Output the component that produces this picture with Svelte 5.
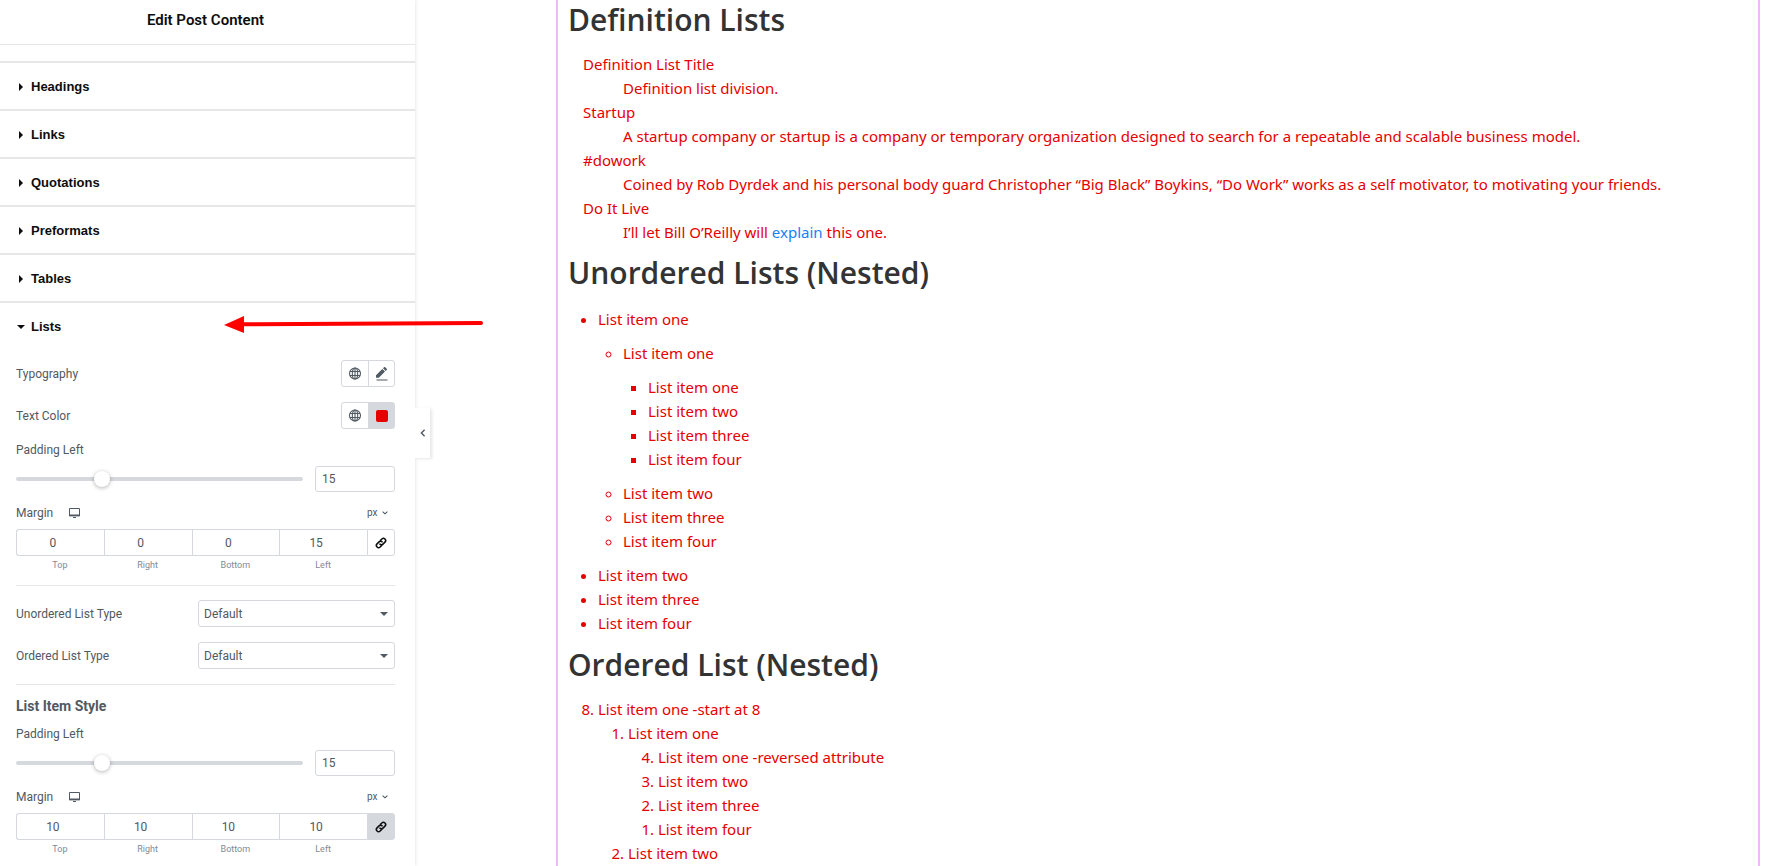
<script lang="ts">
  type Box = { side: string; value: number };

  const sections = ["Headings", "Links", "Quotations", "Preformats", "Tables"];
  const sides = ["Top", "Right", "Bottom", "Left"];

  let listsOpen = $state(true);
  let listPadding = $state(15);
  let itemPadding = $state(15);
  let unorderedType = $state("Default");
  let orderedType = $state("Default");

  let listMargin: Box[] = $state([0, 0, 0, 15].map((value, i) => ({ side: sides[i], value })));
  let itemMargin: Box[] = $state([10, 10, 10, 10].map((value, i) => ({ side: sides[i], value })));
  let listLinked = $state(false);
  let itemLinked = $state(true);
</script>

{#snippet globe()}
  <svg class="icon" viewBox="0 0 14 14" width="14" height="14" aria-hidden="true">
    <g fill="none" stroke="currentColor" stroke-width="1.1">
      <circle cx="7" cy="6.5" r="5.5" />
      <ellipse cx="7" cy="6.5" rx="2.7" ry="5.5" />
      <path d="M7 1v11M2 4.5h10M2 8.5h10" />
    </g>
  </svg>
{/snippet}

{#snippet chain()}
  <svg class="icon" viewBox="0 0 14 14" width="14" height="14" aria-hidden="true">
    <g fill="none" stroke="currentColor" stroke-width="1.5" transform="rotate(-45 7 7)">
      <path d="M6.2 9.2H3.6a2.2 2.2 0 0 1 0-4.4h2.8a2.2 2.2 0 0 1 2.1 2.8" />
      <path d="M7.8 4.8h2.6a2.2 2.2 0 0 1 0 4.4H7.6a2.2 2.2 0 0 1-2.1-2.8" />
    </g>
  </svg>
{/snippet}

{#snippet marginHead(id: string)}
  <div class="margin-head">
    <span>Margin</span>
    <button type="button" class="device" aria-label="Desktop">
      <svg viewBox="0 0 11 10" width="11" height="10" aria-hidden="true">
        <path d="M.5.5h10v7.2H.5z" fill="none" stroke="currentColor" />
        <path d="M0 6.6h11v1.6H0zM4 9h3v1H4z" fill="currentColor" />
      </svg>
    </button>
    <span class="unit">
      <select {id} aria-label="Margin unit">
        <option>px</option>
        <option>em</option>
        <option>%</option>
      </select>
      <svg viewBox="0 0 6 4" width="6" height="4" aria-hidden="true">
        <path d="M.6.6 3 2.8 5.4.6" fill="none" stroke="currentColor" stroke-width="1.1" />
      </svg>
    </span>
  </div>
{/snippet}

{#snippet caret()}
  <svg class="select-caret" viewBox="0 0 8 4" width="8" height="4" aria-hidden="true">
    <path d="M0 0h8L4 4z" fill="currentColor" />
  </svg>
{/snippet}

<div class="editor">
  <aside class="panel">
    <header class="panel-header"><h1>Edit Post Content</h1></header>

    <div class="sections">
      {#each sections as name}
        <button type="button" class="section-title" aria-expanded="false">
          <svg viewBox="0 0 8 8" width="8" height="8" aria-hidden="true">
            <path d="M2 0 6 4 2 8z" fill="currentColor" />
          </svg>
          {name}
        </button>
      {/each}
      <button
        type="button"
        class="section-title"
        aria-expanded={listsOpen}
        onclick={() => (listsOpen = !listsOpen)}
      >
        <svg viewBox="0 0 8 8" width="8" height="8" aria-hidden="true">
          <path d="M0 2h8L4 6z" fill="currentColor" />
        </svg>
        Lists
      </button>
    </div>

    {#if listsOpen}
      <div class="controls">
        <div class="row">
          <span>Typography</span>
          <div class="pair">
            <button type="button" aria-label="Global fonts">{@render globe()}</button>
            <button type="button" aria-label="Edit typography">
              <svg class="icon" viewBox="0 0 14 14" width="14" height="14" aria-hidden="true">
                <path
                  d="M1 10.8V8.2l6.3-6.3 2.7 2.7-6.2 6.2zM8 1.2 9 .3a1 1 0 0 1 1.3 0l1.4 1.4a1 1 0 0 1 0 1.3l-1 .9zM1.5 12.4h11v1.2h-11z"
                  fill="currentColor"
                />
              </svg>
            </button>
          </div>
        </div>

        <div class="row">
          <span>Text Color</span>
          <div class="pair">
            <button type="button" aria-label="Global colors">{@render globe()}</button>
            <button type="button" class="is-active" aria-label="Pick color"><i class="swatch"></i></button>
          </div>
        </div>

        <div class="stack">
          <label for="list-padding">Padding Left</label>
          <div class="slider">
            <input type="range" min="0" max="52" aria-label="Padding Left" bind:value={listPadding} />
            <input id="list-padding" class="amount" type="number" bind:value={listPadding} />
          </div>
        </div>

        <div class="stack">
          {@render marginHead("list-margin-unit")}
          <div class="dimensions">
            {#each listMargin as box}
              <label>
                <input type="number" bind:value={box.value} />
                <span>{box.side}</span>
              </label>
            {/each}
            <button
              type="button"
              class:is-active={listLinked}
              aria-label="Link values together"
              onclick={() => (listLinked = !listLinked)}
            >
              {@render chain()}
            </button>
          </div>
        </div>

        <div class="row ruled">
          <label for="unordered-type">Unordered List Type</label>
          <div class="select">
            <select id="unordered-type" bind:value={unorderedType}>
              <option>Default</option>
              <option>Disc</option>
              <option>Circle</option>
              <option>Square</option>
            </select>
            {@render caret()}
          </div>
        </div>

        <div class="row">
          <label for="ordered-type">Ordered List Type</label>
          <div class="select">
            <select id="ordered-type" bind:value={orderedType}>
              <option>Default</option>
              <option>Decimal</option>
              <option>Lower Alpha</option>
              <option>Upper Roman</option>
            </select>
            {@render caret()}
          </div>
        </div>

        <h2 class="ruled">List Item Style</h2>

        <div class="stack">
          <label for="item-padding">Padding Left</label>
          <div class="slider">
            <input type="range" min="0" max="52" aria-label="Padding Left" bind:value={itemPadding} />
            <input id="item-padding" class="amount" type="number" bind:value={itemPadding} />
          </div>
        </div>

        <div class="stack">
          {@render marginHead("item-margin-unit")}
          <div class="dimensions">
            {#each itemMargin as box}
              <label>
                <input type="number" bind:value={box.value} />
                <span>{box.side}</span>
              </label>
            {/each}
            <button
              type="button"
              class:is-active={itemLinked}
              aria-label="Link values together"
              onclick={() => (itemLinked = !itemLinked)}
            >
              {@render chain()}
            </button>
          </div>
        </div>
      </div>
    {/if}

    <button type="button" class="collapse" aria-label="Hide panel">
      <svg viewBox="0 0 6 8" width="6" height="8" aria-hidden="true">
        <path d="M4.6.8 1.4 4l3.2 3.2" fill="none" stroke="currentColor" stroke-width="1.4" />
      </svg>
    </button>
  </aside>

  <main class="preview">
    <article class="post">
      <h2>Definition Lists</h2>
      <dl>
        <dt>Definition List Title</dt>
        <dd>Definition list division.</dd>
        <dt>Startup</dt>
        <dd>A startup company or startup is a company or temporary organization designed to search for a repeatable and scalable business model.</dd>
        <dt>#dowork</dt>
        <dd>Coined by Rob Dyrdek and his personal body guard Christopher “Big Black” Boykins, “Do Work” works as a self motivator, to motivating your friends.</dd>
        <dt>Do It Live</dt>
        <dd>I’ll let Bill O’Reilly will <a href="#explain">explain</a> this one.</dd>
      </dl>

      <h2>Unordered Lists (Nested)</h2>
      <ul>
        <li>
          List item one
          <ul>
            <li>
              List item one
              <ul>
                <li>List item one</li>
                <li>List item two</li>
                <li>List item three</li>
                <li>List item four</li>
              </ul>
            </li>
            <li>List item two</li>
            <li>List item three</li>
            <li>List item four</li>
          </ul>
        </li>
        <li>List item two</li>
        <li>List item three</li>
        <li>List item four</li>
      </ul>

      <h2>Ordered List (Nested)</h2>
      <ol start="8">
        <li>
          List item one -start at 8
          <ol>
            <li>
              List item one
              <ol reversed>
                <li>List item one -reversed attribute</li>
                <li>List item two</li>
                <li>List item three</li>
                <li>List item four</li>
              </ol>
            </li>
            <li>List item two</li>
          </ol>
        </li>
      </ol>
    </article>
  </main>

  <!-- callout pointing at the open section -->
  <svg class="pointer" viewBox="0 0 260 18" width="260" height="18" aria-hidden="true">
    <path d="M0 9 20 0v17z" fill="#f00" />
    <path d="M18 8.2 257 7" fill="none" stroke="#f00" stroke-width="4" stroke-linecap="round" />
  </svg>
</div>

<style>
  :global(body) {
    background: #fff;
  }

  .editor {
    --line: #d5d8dc;
    --ink: #515962;
    position: relative;
    display: flex;
    height: 100vh;
    overflow: hidden;
  }

  button,
  input,
  select {
    box-sizing: border-box;
    margin: 0;
    padding: 0;
    border: 0;
    background: none;
    color: inherit;
    font: inherit;
  }

  svg {
    display: block;
  }

  .panel {
    position: relative;
    flex: 0 0 415px;
    background: #fff;
    box-shadow: 0 0 4px rgba(0, 0, 0, 0.14);
    color: var(--ink);
    font: 12px/12px Roboto, Arial, sans-serif;
  }

  .panel-header {
    padding: 10px 4px 14px 0;
    border-bottom: 1px solid #e6e6e6;
    margin-bottom: 16px;
    text-align: center;
  }

  .panel-header h1 {
    margin: 0;
    color: #0c0d0e;
    font-size: 15px;
    font-weight: 600;
    line-height: 20px;
  }

  .section-title {
    display: flex;
    align-items: center;
    gap: 6px;
    width: 100%;
    height: 48px;
    padding: 2px 0 0 17px;
    border-top: 2px solid #e6e6e6;
    color: #0c0d0e;
    font: bold 13px/16px "Liberation Sans", Arial, sans-serif;
    text-align: left;
    cursor: pointer;
  }

  .controls {
    display: flex;
    flex-direction: column;
    gap: 15px;
    padding: 11px 20px 12px 16px;
  }

  .controls h2 {
    margin: 0;
    font-size: 14px;
    font-weight: 700;
    line-height: 14px;
  }

  .ruled {
    padding-top: 14px;
    border-top: 1px solid #e6e6e6;
  }

  .row {
    display: flex;
    align-items: center;
    justify-content: space-between;
  }

  .stack {
    display: flex;
    flex-direction: column;
    gap: 10px;
  }

  .pair {
    display: grid;
    grid-template-columns: 26px 26px;
    height: 25px;
    border: 1px solid var(--line);
    border-radius: 3px;
  }

  .pair button,
  .dimensions button {
    display: grid;
    place-items: center;
    cursor: pointer;
  }

  .pair button + button {
    border-left: 1px solid var(--line);
  }

  .is-active {
    background: var(--line);
  }

  .swatch {
    width: 12px;
    height: 12px;
    border-radius: 2px;
    background: #e60000;
  }

  .slider {
    display: flex;
    align-items: center;
    gap: 12px;
  }

  .slider input[type="range"] {
    flex: 1;
    min-width: 0;
    height: 16px;
    appearance: none;
  }

  .slider input::-webkit-slider-runnable-track {
    height: 4px;
    border-radius: 2px;
    background: var(--line);
  }

  .slider input::-webkit-slider-thumb {
    width: 16px;
    height: 16px;
    margin-top: -6px;
    border-radius: 50%;
    background: #fff;
    box-shadow: 0 1px 4px rgba(0, 0, 0, 0.3);
    appearance: none;
  }

  .amount {
    width: 80px;
    height: 26px;
    padding: 0 6px;
    border: 1px solid var(--line);
    border-radius: 3px;
  }

  .margin-head {
    display: flex;
    align-items: center;
    height: 12px;
  }

  .device {
    margin-left: 16px;
  }

  .unit {
    position: relative;
    margin-left: auto;
    padding-right: 7px;
    font-size: 10px;
  }

  .unit select {
    display: block;
    width: 21px;
    appearance: none;
  }

  .unit svg {
    position: absolute;
    top: 4px;
    right: 7px;
  }

  .dimensions {
    display: grid;
    grid-template-columns: repeat(4, 1fr) 28px;
  }

  .dimensions label {
    display: flex;
    flex-direction: column;
    gap: 5px;
    color: #818a96;
    font-size: 9px;
    line-height: 9px;
    text-align: center;
  }

  .dimensions input {
    width: 100%;
    height: 27px;
    border: 1px solid var(--line);
    border-right: 0;
    color: var(--ink);
    font-size: 12px;
    text-align: center;
  }

  .dimensions label:first-child input {
    border-radius: 3px 0 0 3px;
  }

  .dimensions button {
    height: 27px;
    border: 1px solid var(--line);
    border-radius: 0 3px 3px 0;
    color: #0c0d0e;
  }

  .select {
    position: relative;
    width: 197px;
  }

  .select select {
    display: block;
    width: 100%;
    height: 27px;
    padding: 0 5px;
    border: 1px solid var(--line);
    border-radius: 3px;
    appearance: none;
  }

  .select-caret {
    position: absolute;
    top: 12px;
    right: 7px;
    pointer-events: none;
  }

  .collapse {
    position: absolute;
    top: 408px;
    left: 100%;
    display: grid;
    place-items: center;
    width: 15px;
    height: 50px;
    background: #fff;
    box-shadow: 2px 1px 3px rgba(0, 0, 0, 0.1);
    cursor: pointer;
  }

  .preview {
    flex: 1;
    min-width: 0;
    padding: 0 11px 0 141px;
  }

  .post {
    box-sizing: border-box;
    min-height: 100%;
    padding: 0 10px;
    border: solid #f0b8fa;
    border-width: 0 2px;
    color: #e60000;
    font: 15px/24px "Noto Sans", "Open Sans", sans-serif;
  }

  .post h2 {
    margin: 9px 0 12px;
    color: #333;
    font-family: "Open Sans", "Noto Sans", sans-serif;
    font-size: 30px;
    font-weight: 600;
    line-height: 40px;
  }

  .post h2:first-child {
    margin-top: 0;
  }

  .post dl {
    margin: 0 0 0 15px;
  }

  .post dd {
    margin: 0 0 0 40px;
  }

  .post a {
    color: #1a7efb;
    text-decoration: none;
  }

  .post ul {
    margin: 14px 0 10px 15px;
    padding-left: 15px;
  }

  .post ul ul {
    margin: 10px 0 10px 10px;
  }

  .post ol {
    margin: 0 0 0 15px;
    padding-left: 15px;
  }

  .pointer {
    position: absolute;
    top: 316px;
    left: 224px;
    pointer-events: none;
  }
</style>
